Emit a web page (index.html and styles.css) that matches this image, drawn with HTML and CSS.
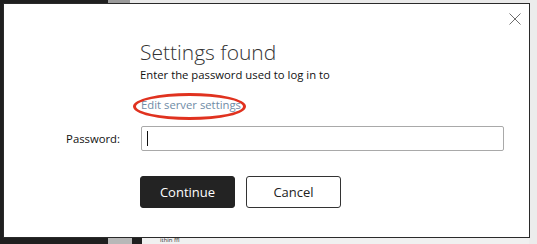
FILE: index.html
```html
<!DOCTYPE html>
<html>
<head>
<meta charset="utf-8">
<link rel="stylesheet" href="styles.css">
</head>
<body>
<div class="backdrop">
  <div class="bg-top">
    <span class="bg-gap"></span>
    <span class="bg-dark"></span>
    <span class="bg-light"></span>
  </div>
  <div class="bg-bottom">
    <span class="bg-gap"></span>
    <span class="bg-dark2"></span>
    <span class="bg-text">ithin ffl</span>
  </div>
  <div class="bg-right"></div>
</div>
<div class="dialog">
  <button class="close" aria-label="Close">
    <svg width="12" height="12" viewBox="0 0 12 12"><path d="M0.5 0.5 L11.5 11.5 M11.5 0.5 L0.5 11.5" stroke="#6e6e6e" stroke-width="1" fill="none"/></svg>
  </button>
  <div class="content">
    <h1 class="title">Settings found</h1>
    <p class="subtitle">Enter the password used to log in to</p>
    <div class="link-row">
      <a class="link" href="#">Edit server settings</a>
      <span class="circle"></span>
    </div>
  </div>
  <div class="field-row">
    <label class="label">Password:</label>
    <div class="input"><span class="caret"></span></div>
  </div>
  <div class="buttons">
    <button class="btn btn-primary">Continue</button>
    <button class="btn btn-secondary">Cancel</button>
  </div>
</div>
</body>
</html>
```
FILE: styles.css
```css
* { box-sizing: border-box; }
html, body { margin: 0; padding: 0; }
body {
  width: 537px;
  height: 244px;
  overflow: hidden;
  background: #1f1f1f;
  font-family: "Open Sans", "Noto Sans", sans-serif;
  position: relative;
}
.backdrop { position: absolute; inset: 0; }
.bg-top {
  position: absolute; left: 0; top: 0; right: 0; height: 4px;
  display: flex;
}
.bg-top .bg-gap { width: 108px; background: #1f1f1f; }
.bg-top .bg-dark { width: 22px; background: #9a9a9a; }
.bg-top .bg-light { flex: 1; background: #e9e9e9; }
.bg-bottom {
  position: absolute; left: 0; bottom: 0; right: 0; height: 7px;
  display: flex; overflow: hidden;
}
.bg-bottom .bg-gap { width: 108px; background: #1f1f1f; }
.bg-bottom .bg-dark2 { width: 24px; background: #b8b8b8; }
.bg-bottom .bg-text {
  flex: 1; background: #f0f0f0; color: #333; font-size: 6px; line-height: 7px;
  padding-left: 18px; border-left: 10px solid #1f1f1f;
}
.bg-right {
  position: absolute; right: 0; top: 0; bottom: 0; width: 8px;
  background: #ececec;
}
.dialog {
  position: absolute;
  left: 3px; top: 3px;
  width: 527px; height: 235px;
  background: #fff;
  border: 1px solid #2a2a2a;
  display: flex; flex-direction: column;
  padding: 34px 0 0 0;
}
.close {
  position: absolute; right: 7px; top: 8px;
  width: 14px; height: 14px; padding: 1px;
  border: 0; background: transparent;
}
.content { padding-left: 136px; }
.title {
  margin: 0;
  font-weight: 300;
  font-size: 21px;
  line-height: 28px;
  color: #333;
}
.subtitle {
  margin: 1px 0 0 0;
  font-size: 11.3px;
  line-height: 16px;
  color: #111;
}
.link-row {
  position: relative;
  margin-top: 9px;
  height: 18px;
}
.link {
  font-size: 11.3px;
  line-height: 18px;
  color: #6f8ca6;
  text-decoration: none;
  padding-left: 1px;
}
.circle {
  position: absolute;
  left: -7px; top: 1px;
  width: 113px; height: 27px;
  border: 3px solid #e0321f;
  border-radius: 50%;
}
.field-row {
  display: flex; align-items: center;
  margin-top: 16px;
  height: 25px;
}
.label {
  width: 116px;
  text-align: right;
  font-size: 11.3px;
  color: #111;
}
.input {
  margin-left: 21px;
  width: 363px; height: 25px;
  border: 1px solid #a9a9a9;
  border-radius: 2px;
  position: relative;
}
.caret {
  position: absolute; left: 5px; top: 4px;
  width: 1px; height: 15px; background: #111;
}
.buttons {
  display: flex; gap: 11px;
  margin-top: 25px;
  padding-left: 136px;
}
.btn {
  width: 95px; height: 32px;
  font-family: "Open Sans", "Noto Sans", sans-serif;
  font-size: 13px;
  border-radius: 3px;
  padding: 0;
}
.btn-primary { background: #232323; color: #fff; border: 1px solid #232323; }
.btn-secondary { background: #fff; color: #222; border: 1px solid #333; }
```
